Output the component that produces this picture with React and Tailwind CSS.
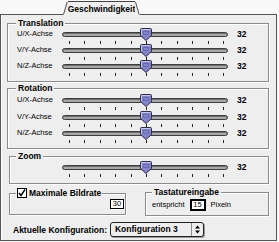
import React from 'react';

const ticks = Array.from({ length: 11 });

function Thumb() {
  return (
    <svg width="12" height="13" viewBox="0 0 12 13" className="absolute left-[78px] top-[-1px]">
      <path d="M1.5 0.5H10.5Q11.5 0.5 11.5 1.5V7.5L6 12.5L0.5 7.5V1.5Q0.5 0.5 1.5 0.5Z" fill="#8484c8" stroke="#2e2e4a" />
      <path d="M1.5 7V1.5H10.5" fill="none" stroke="#c4c4ee" />
      <rect x="3.5" y="3.5" width="5" height="3" fill="none" stroke="#6a6ab0" />
    </svg>
  );
}

function Slider({ label, h = 'h-[16px]' }) {
  return (
    <div className={`flex flex-col ${h}`}>
      <div className="flex items-center h-[10px]">
        <span className="w-[45px] text-[7.5px] leading-[10px]">{label}</span>
        <div className="relative w-[166px] h-[10px] flex items-center">
          <div className="w-full h-[5px] rounded-full border border-[#3c3c3c] bg-[#a8a8a8] shadow-[inset_0_1px_0_#6e6e6e]" />
          <Thumb />
        </div>
        <span className="ml-[9px] text-[8.5px] font-bold leading-[10px]">32</span>
      </div>
      <div className="ml-[52px] w-[155px] flex justify-between pt-[2px]">
        {ticks.map((_, i) => (
          <span key={i} className="w-[1px] h-[3px] bg-[#222]" />
        ))}
      </div>
    </div>
  );
}

function Group({ title, className, legendClass = '', children }) {
  return (
    <fieldset className={`min-w-0 border border-[#8c8c8c] shadow-[1px_1px_0_#fff,inset_1px_1px_0_#fff] ${className}`}>
      <legend className={`px-[2px] bg-[#eeeeee] text-[8.5px] leading-[9px] font-bold ${legendClass}`}>{title}</legend>
      {children}
    </fieldset>
  );
}

export default function App() {
  return (
    <div className="w-[279px] h-[242px] bg-[#f8f8f8] text-black font-['Liberation_Sans',Arial,sans-serif]">
      <div className="w-[277px]">
        <div className="flex h-[15px] items-end">
          <div className="w-[63px] h-full border-b border-[#555]" />
          <div className="flex w-[77px] h-[14px]">
            <svg width="5" height="14" viewBox="0 0 5 14">
              <path d="M0 14L4.5 0.5H5V14Z" fill="#eeeeee" />
              <path d="M0.5 14L4.5 0.5" stroke="#444" fill="none" />
            </svg>
            <div className="flex-1 border-t border-[#444] bg-[#eeeeee] flex items-center justify-center text-[8.5px] font-bold leading-[12px]">
              Geschwindigkeit
            </div>
            <svg width="5" height="14" viewBox="0 0 5 14">
              <path d="M0 0.5H0.5L5 14H0Z" fill="#eeeeee" />
              <path d="M0.5 0.5L4.5 14" stroke="#444" fill="none" />
            </svg>
          </div>
          <div className="flex-1 h-full border-b border-[#555]" />
        </div>

        <div className="h-[226px] border-x border-b border-[#555] bg-[#eeeeee] shadow-[inset_1px_0_0_#fff] pl-[6px] pr-[7px] pt-[4px] flex flex-col">
          <Group title="Translation" className="pl-[9px] pt-[1px] pb-[4px]" legendClass="-ml-[1px]">
            <Slider label="U/X-Achse" />
            <Slider label="V/Y-Achse" />
            <Slider label="N/Z-Achse" />
          </Group>

          <Group title="Rotation" className="mt-[2px] pl-[9px] pt-[2px] pb-[4px]" legendClass="-ml-[1px]">
            <Slider label="U/X-Achse" h="h-[17px]" />
            <Slider label="V/Y-Achse" />
            <Slider label="N/Z-Achse" />
          </Group>

          <Group title="Zoom" className="mt-[3px] ml-[2px] pl-[7px] pt-[1px] pb-[5px]" legendClass="-ml-[1px]">
            <Slider label="" />
          </Group>

          <div className="flex items-start mt-[4px]">
            <fieldset className="ml-[2px] w-[117px] min-w-0 border border-[#8c8c8c] shadow-[1px_1px_0_#fff,inset_1px_1px_0_#fff] pl-[7px] pr-[1px] pt-[1px] pb-[5px]">
              <legend className="flex items-center h-[10px] -ml-[1px] px-[1px] bg-[#eeeeee]">
                <span className="w-[10px] h-[10px] border border-black bg-white flex items-center justify-center">
                  <svg width="8" height="8" viewBox="0 0 8 8">
                    <path d="M1 4L3 6.5L7 0.5" stroke="#000" strokeWidth="1.4" fill="none" />
                  </svg>
                </span>
                <span className="ml-[2px] text-[8.5px] leading-[9px] font-bold">Maximale Bildrate</span>
              </legend>
              <div className="flex justify-end">
                <span className="w-[14px] h-[10px] border border-black bg-white shadow-[1px_1px_0_#fff] text-[7.5px] leading-[8px] text-center">30</span>
              </div>
            </fieldset>

            <Group title="Tastatureingabe" className="ml-[19px] w-[124px] pl-[6px] pt-[2px] pb-[4px]" legendClass="ml-[0px]">
              <div className="flex items-center">
                <span className="text-[7.5px] leading-[12px]">entspricht</span>
                <span className="ml-[5px] w-[16px] h-[12px] border-2 border-black bg-white text-[7.5px] leading-[8px] text-center">15</span>
                <span className="ml-[5px] text-[7.5px] leading-[12px]">Pixeln</span>
              </div>
            </Group>
          </div>

          <div className="flex items-center mt-[6px] ml-[6px]">
            <span className="text-[8.5px] leading-[10px] font-bold">Aktuelle Konfiguration:</span>
            <div className="ml-[3px] w-[94px] h-[15px] border border-[#222] rounded-[3px] bg-[#eeeeee] shadow-[1px_1px_0_#999] flex">
              <span className="flex-1 pl-[4px] text-[8.5px] leading-[13px] font-bold">Konfiguration 3</span>
              <div className="w-[12px] border-l border-[#8c8c8c] flex items-center justify-center">
                <svg width="7" height="9" viewBox="0 0 7 9">
                  <path d="M3.5 0.5L6 3.5H1Z" fill="#000" />
                  <path d="M3.5 8.5L6 5.5H1Z" fill="#000" />
                </svg>
              </div>
            </div>
          </div>
        </div>
      </div>
    </div>
  );
}
